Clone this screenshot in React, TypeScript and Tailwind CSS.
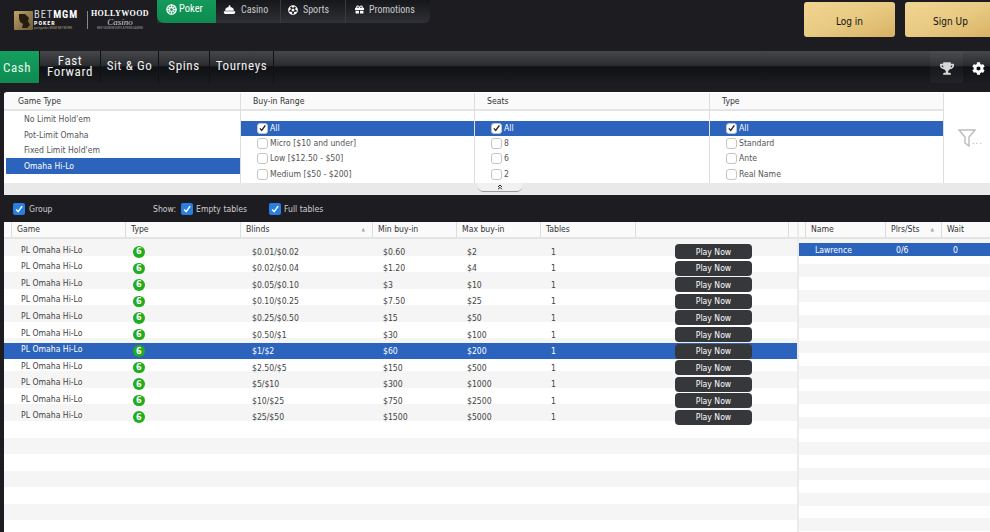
import { ChevronsUp } from 'lucide-react';
import { FaCog, FaFutbol, FaGift, FaTrophy } from 'react-icons/fa';

// --- Data --- //
const filterColumns = [
  { title: 'Buy-in Range', options: ['All', 'Micro [$10 and under]', 'Low [$12.50 - $50]', 'Medium [$50 - $200]'] },
  { title: 'Seats', options: ['All', '8', '6', '2'] },
  { title: 'Type', options: ['All', 'Standard', 'Ante', 'Real Name'] },
];

const gameTypes = ['No Limit Hold\'em', 'Pot-Limit Omaha', 'Fixed Limit Hold\'em', 'Omaha Hi-Lo'];

const games = [
  ['$0.01/$0.02', '$0.60', '$2'],
  ['$0.02/$0.04', '$1.20', '$4'],
  ['$0.05/$0.10', '$3', '$10'],
  ['$0.10/$0.25', '$7.50', '$25'],
  ['$0.25/$0.50', '$15', '$50'],
  ['$0.50/$1', '$30', '$100'],
  ['$1/$2', '$60', '$200'],
  ['$2.50/$5', '$150', '$500'],
  ['$5/$10', '$300', '$1000'],
  ['$10/$25', '$750', '$2500'],
  ['$25/$50', '$1500', '$5000'],
];

// --- Icons --- //
const ChipIcon = () => (
  <svg viewBox="0 0 20 20" className="h-[11px] w-[11px]" fill="none" stroke="white">
    <circle cx="10" cy="10" r="8.5" strokeWidth="2" />
    <circle cx="10" cy="10" r="3.5" strokeWidth="2" />
    <path d="M10 1v5M10 14v5M1 10h5M14 10h5M4 4l3 3M13 13l3 3M16 4l-3 3M7 13l-3 3" strokeWidth="2.4" />
  </svg>
);

const CasinoIcon = () => (
  <svg viewBox="0 0 20 16" className="h-[10px] w-[13px]" fill="white">
    <circle cx="10" cy="2" r="1.6" />
    <path d="M3 9a7 6 0 0 1 14 0z" />
    <path d="M1 10h18v1.5a3 3 0 0 1-3 3H4a3 3 0 0 1-3-3z" />
  </svg>
);

const CheckMark = ({ color }: { color: string }) => (
  <svg viewBox="0 0 12 12" className="h-[10px] w-[10px]" fill="none" stroke={color} strokeWidth="1.8">
    <path d="M2.5 6.5 5 9.2 9.8 2.5" />
  </svg>
);

const FilterIcon = () => (
  <svg viewBox="0 0 18 18" className="h-[18px] w-[18px] shrink-0" fill="none" stroke="#b9bcbf" strokeWidth="1.4">
    <path d="M1 1h16l-6 7v9l-4-3V8z" />
  </svg>
);

// --- Small pieces --- //
const ListCheck = ({ checked }: { checked: boolean }) => (
  <span className="mr-[2px] flex h-[11px] w-[11px] shrink-0 items-center justify-center rounded-[3px] border border-[#c4c4c4] bg-white">
    {checked && <CheckMark color="#222222" />}
  </span>
);

const BlueCheck = () => (
  <span className="flex h-[12px] w-[12px] shrink-0 items-center justify-center rounded-[2px] bg-[#2a7de1]">
    <CheckMark color="white" />
  </span>
);

const NavItem = ({ label, icon, width }: { label: string; icon: React.ReactNode; width: string }) => (
  <div className={`flex h-full items-center gap-[5px] border-r border-[#3a3b40] pb-[4px] pl-[7px] text-[10px] text-[#c9cacc] ${width}`}>
    {icon}
    <span>{label}</span>
  </div>
);

const SubTab = ({ children, width }: { children: React.ReactNode; width: string }) => (
  <div className={`flex h-full items-center justify-center border-r border-[#111111] pb-[3px] text-center text-[13px] leading-[11px] tracking-[0.6px] text-[#f0f0f0] ${width}`}>
    {children}
  </div>
);

const HeaderCell = ({ label, width, sort }: { label?: string; width: string; sort?: boolean }) => (
  <div className={`flex h-full items-center justify-between border-r border-[#dcdcdc] pl-[5px] pr-[7px] ${width}`}>
    <span>{label}</span>
    {sort && <span className="text-[5px] text-[#a8a8a8]">▲</span>}
  </div>
);

const FilterColumn = ({ title, options, width }: { title: string; options: string[]; width: string }) => (
  <div className={`flex h-full shrink-0 flex-col border-r border-[#dedede] ${width}`}>
    <div className="flex h-[18px] shrink-0 items-center border-b-2 border-[#e4e4e4] bg-[#fafafa] pl-[12px] text-[#333333]">{title}</div>
    <div className="pt-[9.5px]">
      {options.map((option, i) => (
        <div key={option} className={`flex h-[15.3px] items-center pl-[16px] ${i === 0 ? 'bg-[#2b63bd] text-white' : 'text-[#555555]'}`}>
          <ListCheck checked={i === 0} />
          <span>{option}</span>
        </div>
      ))}
    </div>
  </div>
);

// --- Page --- //
const App = () => {
  return (
    <div className="flex h-[532px] w-[990px] flex-col overflow-hidden bg-[#1c1c21] text-[8.6px] font-['DejaVu_Sans_Condensed','DejaVu_Sans',sans-serif]" style={{ fontStretch: 'condensed' }}>
      {/* Top bar */}
      <div className="flex h-[51px] shrink-0 items-start font-['Roboto',sans-serif]">
        <div className="mt-[10px] ml-[14px] flex h-[20px] w-[143px] shrink-0 items-center text-white">
          <div className="h-[19px] w-[19px] shrink-0 rounded-[1px] bg-gradient-to-br from-[#c2a36a] to-[#6e5a35]">
            <svg viewBox="0 0 19 19" className="h-full w-full" fill="#241d12"><path d="M5 3h6l4 4-1 3 2 4-3 3H8l1-4-3-2-1-4z" /></svg>
          </div>
          <div className="ml-[1px] flex w-[50px] shrink-0 flex-col leading-none">
            <span className="text-[10.5px] leading-[10px] tracking-[0.9px] whitespace-nowrap text-[#d9d9d9]">BET<b className="text-white">MGM</b></span>
            <span className="text-[6px] leading-[6px] font-bold tracking-[1px]">POKER</span>
            <span className="text-[3.5px] leading-[4px] whitespace-nowrap text-[#a99a7c]">partypoker MGM NETWORK</span>
          </div>
          <div className="mx-[3px] h-[18px] w-px shrink-0 bg-[#8a8a8a]" />
          <div className="flex flex-col items-center leading-none">
            <span className="font-['Liberation_Serif',serif] text-[8px] leading-[8px] font-bold tracking-[0.4px] whitespace-nowrap">HOLLYWOOD</span>
            <span className="font-['Liberation_Serif',serif] text-[9px] leading-[9px] text-[#cfcfcf] italic">Casino</span>
            <span className="text-[3px] leading-[3px] whitespace-nowrap text-[#9a9a9a]">MEET MGM RESORTS &amp; PENN GAMING</span>
          </div>
        </div>
        <div className="flex h-[23px] w-[273px] shrink-0 items-stretch rounded-br-[6px] bg-gradient-to-b from-[#16171a] to-[#303136]">
          <div className="flex w-[59px] items-center gap-[2px] rounded-bl-[7px] bg-gradient-to-b from-[#149a5c] to-[#0d8a4e] pb-[5px] pl-[9px] text-[10.5px] text-white">
            <ChipIcon />
            <span>Poker</span>
          </div>
          <NavItem label="Casino" icon={<CasinoIcon />} width="w-[65px]" />
          <NavItem label="Sports" icon={<FaFutbol className="h-[10px] w-[10px] text-white" />} width="w-[65px]" />
          <NavItem label="Promotions" icon={<FaGift className="h-[9px] w-[9px] text-white" />} width="w-[84px] border-r-0 pl-[9px]" />
        </div>
        <div className="ml-auto flex w-[186px] shrink-0 gap-[10px] pt-[2px] font-['DejaVu_Sans_Condensed','DejaVu_Sans',sans-serif]">
          <button className="h-[35px] w-[91px] shrink-0 rounded-[3px] bg-gradient-to-br from-[#f0d592] via-[#e8ca82] to-[#d8b163] pt-[3px] text-[10px] text-[#111111]">Log in</button>
          <button className="h-[35px] w-[91px] shrink-0 rounded-[3px] bg-gradient-to-br from-[#f0d592] via-[#e8ca82] to-[#d8b163] pt-[3px] text-[10px] text-[#111111]">Sign Up</button>
        </div>
      </div>

      {/* Sub tabs */}
      <div className="flex h-[32px] shrink-0 items-stretch bg-[linear-gradient(180deg,#46474b_0,#2b2c30_45%,#101114_50%,#1b1c1f_100%)] font-['Roboto',sans-serif]">
        <div className="flex w-[39px] items-center bg-gradient-to-b from-[#149f5f] to-[#0e8b50] pt-[2px] pl-[3px] text-[13px] tracking-[0.6px] text-[#e4f5ec]">Cash</div>
        <div className="w-px bg-[#111111]" />
        <SubTab width="w-[61px]">Fast<br />Forward</SubTab>
        <SubTab width="w-[58px]">Sit &amp; Go</SubTab>
        <SubTab width="w-[51px]">Spins</SubTab>
        <SubTab width="w-[64px]">Tourneys</SubTab>
        <div className="ml-auto flex items-center">
          <div className="flex h-full w-[33px] items-center justify-center bg-white/[0.03] pt-[2px]">
            <FaTrophy className="h-[13px] w-[14px] text-[#d8d8d8]" />
          </div>
          <div className="flex h-full w-[27px] items-center justify-center pt-[2px] pl-[4px]">
            <FaCog className="h-[13px] w-[13px] text-white" />
          </div>
        </div>
      </div>

      {/* Filters */}
      <div className="mt-[9px] ml-[4px] flex h-[103px] shrink-0 flex-col overflow-hidden rounded-tl-[3px] bg-white">
        <div className="flex h-[91px] shrink-0 pt-[1px]">
          <div className="flex h-full w-[237px] shrink-0 flex-col border-r border-[#dedede]">
            <div className="flex h-[18px] shrink-0 items-center border-b-2 border-[#e4e4e4] bg-[#fafafa] pl-[14px] text-[#333333]">Game Type</div>
            <div className="pt-[1.2px] pl-[2px]">
              {gameTypes.map((type, i) => (
                <div key={type} className={`flex h-[15.4px] items-center pl-[18px] ${i === 3 ? 'bg-[#2b63bd] text-white' : 'text-[#555555]'}`}>{type}</div>
              ))}
            </div>
          </div>
          <FilterColumn title={filterColumns[0].title} options={filterColumns[0].options} width="w-[234px]" />
          <FilterColumn title={filterColumns[1].title} options={filterColumns[1].options} width="w-[235px]" />
          <FilterColumn title={filterColumns[2].title} options={filterColumns[2].options} width="w-[234px]" />
          <div className="flex flex-1 items-center pl-[14px] text-[#a8abae]">
            <FilterIcon />
            <span className="mt-[6px] -ml-[4px] text-[9px] leading-none tracking-[1px]">...</span>
          </div>
        </div>
        <div className="flex h-[12px] shrink-0 bg-[#e9e9e9] pl-[474px]">
          <div className="flex h-[9px] w-[44px] items-center justify-center rounded-b-[5px] border-b border-[#9a9a9a] bg-[#f1f1f1]">
            <ChevronsUp className="h-[8px] w-[8px] text-[#222222]" strokeWidth={3} />
          </div>
        </div>
      </div>

      {/* Table options */}
      <div className="flex h-[27px] shrink-0 items-center pl-[13px] text-[#cfcfcf]">
        <BlueCheck />
        <span className="ml-[4px] w-[124px] pt-[2px]">Group</span>
        <span className="w-[28px] pt-[2px]">Show:</span>
        <BlueCheck />
        <span className="ml-[3px] w-[73px] pt-[2px]">Empty tables</span>
        <BlueCheck />
        <span className="ml-[3px] pt-[2px]">Full tables</span>
      </div>

      {/* Tables */}
      <div className="ml-[4px] flex min-h-0 flex-1 bg-white">
        <div className="flex w-[793px] shrink-0 flex-col">
          <div className="flex h-[17px] shrink-0 border-b-2 border-[#e4e4e4] bg-[#fafafa] text-[#333333]">
            <HeaderCell width="w-[8px] !p-0" />
            <HeaderCell label="Game" width="w-[114px]" />
            <HeaderCell label="Type" width="w-[115px]" />
            <HeaderCell label="Blinds" width="w-[132px]" sort />
            <HeaderCell label="Min buy-in" width="w-[84px]" />
            <HeaderCell label="Max buy-in" width="w-[84px]" />
            <HeaderCell label="Tables" width="w-[95px]" />
            <HeaderCell width="w-[153px]" />
          </div>
          <div className="flex-1 bg-[repeating-linear-gradient(180deg,#f5f5f5_0,#f5f5f5_16.55px,#ffffff_16.55px,#ffffff_33.1px)] pt-[4.5px]">
            {games.map(([blinds, min, max], i) => (
              <div key={blinds} className={`flex h-[16.55px] items-center ${i === 6 ? 'bg-[#2b63bd] text-white' : 'text-[#444444]'}`}>
                <span className="w-[129px] pb-[3px] pl-[17px]">PL Omaha Hi-Lo</span>
                <span className="w-[119px]">
                  <span className="flex h-[11.5px] w-[11.5px] items-center justify-center rounded-full bg-[#22ad1f] text-[9px] leading-none font-bold text-white">6</span>
                </span>
                <span className="w-[131px] pt-[1px]">{blinds}</span>
                <span className="w-[84px] pt-[1px]">{min}</span>
                <span className="w-[84px] pt-[1px]">{max}</span>
                <span className="w-[124px] pt-[1px]">1</span>
                <button className="flex h-[15px] w-[77px] items-center justify-center rounded-[4px] bg-[#36373b] pt-[1px] text-[8.6px] text-white">Play Now</button>
              </div>
            ))}
          </div>
        </div>
        <div className="w-[2px] shrink-0 bg-[#ebebeb]" />
        <div className="flex min-w-0 flex-1 flex-col">
          <div className="flex h-[17px] shrink-0 border-b-2 border-[#e4e4e4] bg-[#fafafa] text-[#333333]">
            <HeaderCell width="w-[7px] !p-0" />
            <HeaderCell label="Name" width="w-[80px]" />
            <HeaderCell label="Plrs/Sts" width="w-[56px]" sort />
            <div className="flex items-center pl-[5px]">Wait</div>
          </div>
          <div className="flex-1 bg-[repeating-linear-gradient(180deg,#f5f5f5_0,#f5f5f5_12.7px,#ffffff_12.7px,#ffffff_25.4px)] pt-[4px]">
            <div className="flex h-[13px] items-center bg-[#2b63bd] pt-[1px] text-white">
              <span className="w-[97px] pl-[16px]">Lawrence</span>
              <span className="w-[57px]">0/6</span>
              <span>0</span>
            </div>
          </div>
        </div>
      </div>
    </div>
  );
};

export default App;
